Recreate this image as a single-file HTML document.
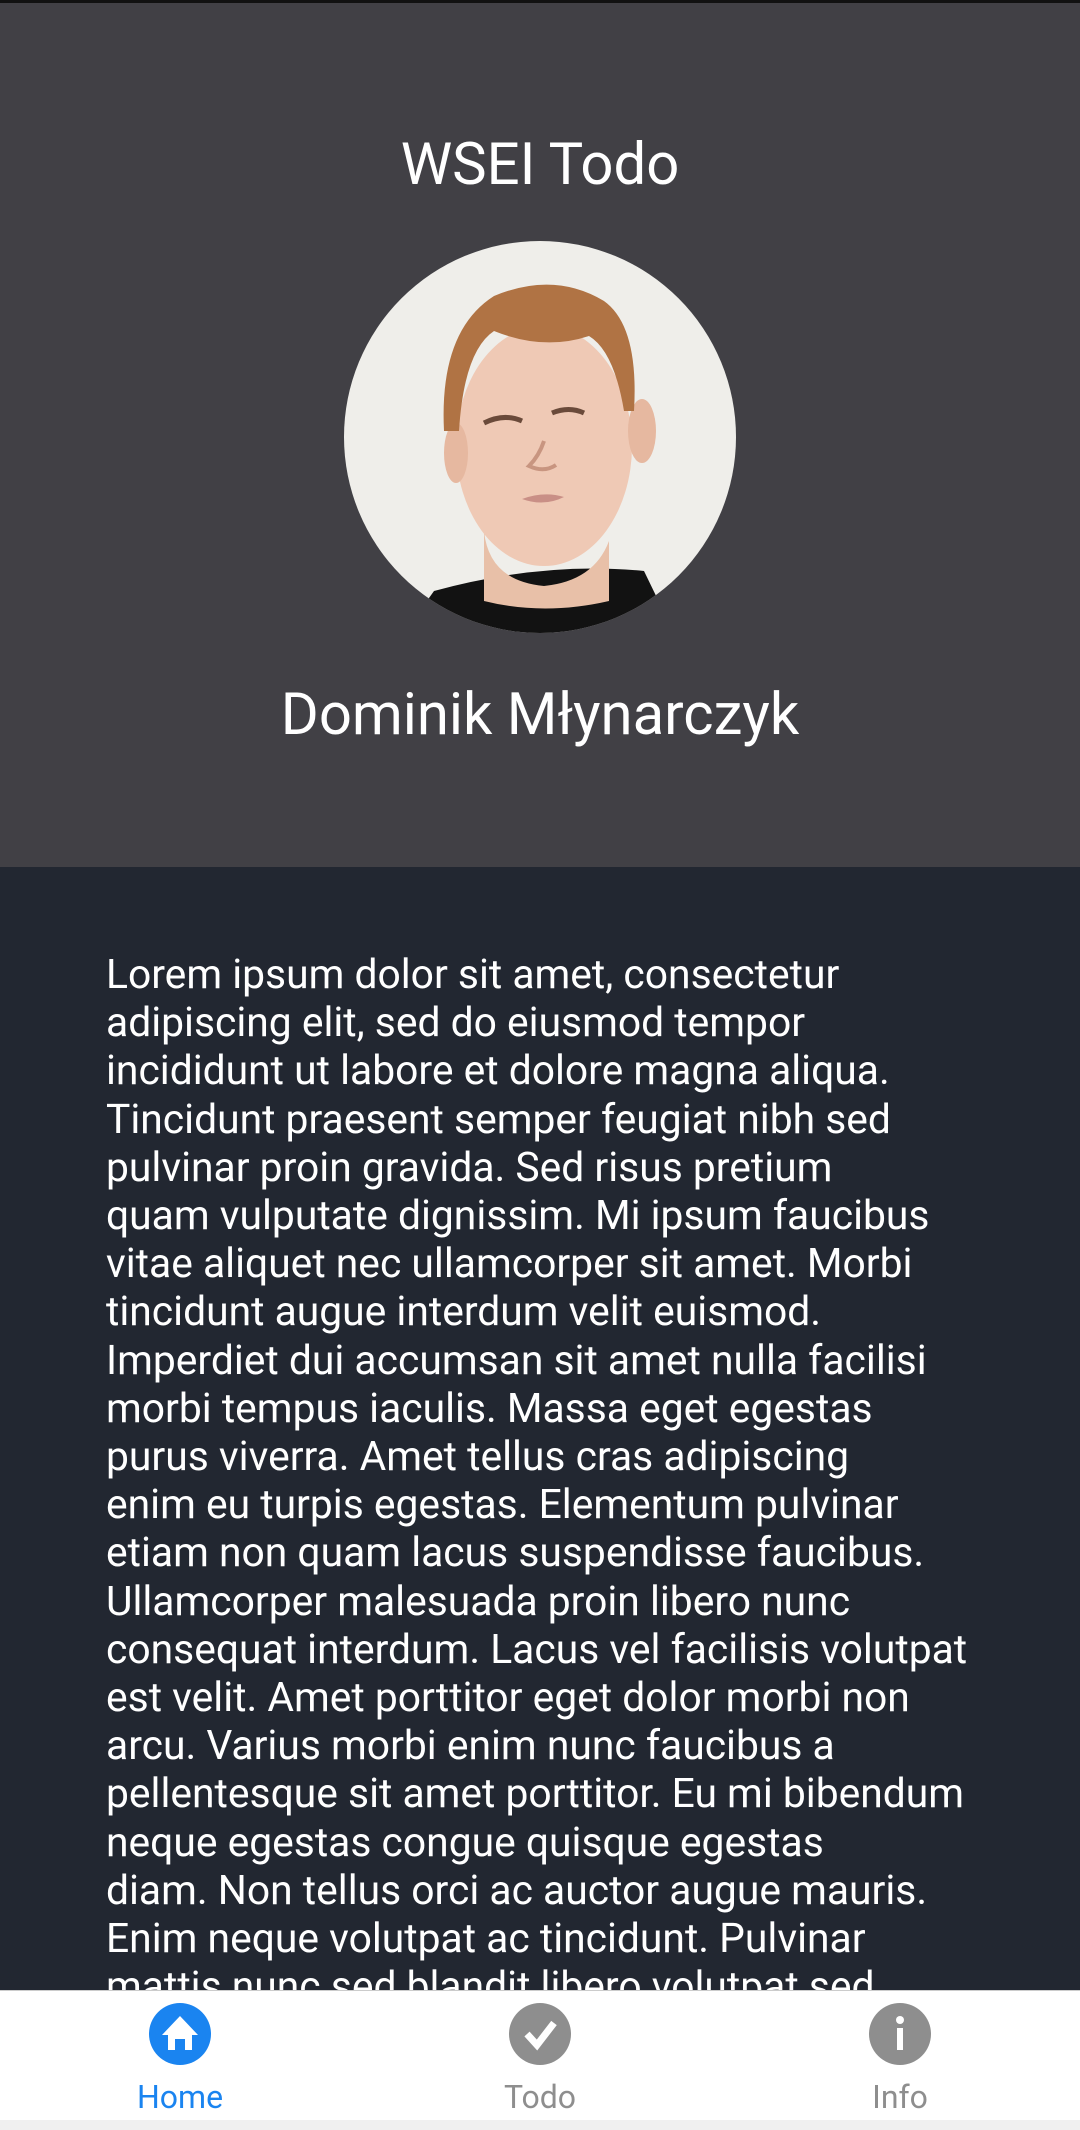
<!DOCTYPE html>
<html><head><meta charset="utf-8"><style>
*{margin:0;padding:0;box-sizing:border-box}
body{width:1080px;height:2130px;overflow:hidden;font-family:"Roboto","Liberation Sans",sans-serif;background:#222731;position:relative}
.top{position:absolute;left:0;top:0;width:1080px;height:867px;background:#414045;border-top:3px solid #111}
.title{position:absolute;top:127px;width:1080px;text-align:center;color:#fff;font-size:58px;line-height:70px}
.name{position:absolute;top:677px;width:1080px;text-align:center;color:#fff;font-size:58px;line-height:70px}
.av{position:absolute;left:344px;top:238px;width:392px;height:392px}
.txt{position:absolute;left:106px;top:950px;color:#fff;font-size:40.8px;line-height:48.2px;white-space:nowrap}
.tab{position:absolute;left:0;top:1990px;width:1080px;height:130px;background:#fff;border-top:1px solid #ccc}
.strip{position:absolute;left:0;top:2120px;width:1080px;height:10px;background:#f0f0f0}
.it{position:absolute;top:0;width:200px;text-align:center}
.it svg{position:absolute;left:69px;top:12px}
.it span{position:absolute;top:86px;left:0;width:200px;font-size:32px;line-height:40px}
</style></head><body>
<div class="top">
<div class="title">WSEI Todo</div>
<svg class="av" viewBox="0 0 392 392">
<defs><clipPath id="c"><circle cx="196" cy="196" r="196"/></clipPath></defs>
<g clip-path="url(#c)">
<rect width="392" height="392" fill="#efeeea"/>
<path d="M90 350 Q200 320 300 330 L330 392 L60 392Z" fill="#121212"/>
<path d="M140 290 Q145 340 200 345 Q250 340 265 300 L265 360 Q200 375 140 360Z" fill="#e8c0a8"/>
<ellipse cx="200" cy="205" rx="88" ry="120" fill="#efc9b5"/>
<ellipse cx="112" cy="212" rx="12" ry="30" fill="#e6b8a0"/>
<ellipse cx="298" cy="190" rx="14" ry="32" fill="#e6b8a0"/>
<path d="M100 190 Q95 90 150 55 Q210 30 260 60 Q295 85 290 170 L280 170 Q270 110 245 95 Q200 110 150 90 Q120 110 115 190Z" fill="#b07344"/>
<path d="M140 182 Q160 172 178 180" stroke="#6a4a3a" stroke-width="5" fill="none"/>
<path d="M208 172 Q225 165 240 172" stroke="#6a4a3a" stroke-width="5" fill="none"/>
<path d="M200 200 Q195 215 185 225 Q200 232 212 224" stroke="#c89580" stroke-width="4" fill="none"/>
<path d="M178 258 Q200 250 220 256 Q200 266 178 258Z" fill="#c98f86"/>
</g></svg>
<div class="name">Dominik Młynarczyk</div>
</div>
<div class="txt">Lorem ipsum dolor sit amet, consectetur<br>adipiscing elit, sed do eiusmod tempor<br>incididunt ut labore et dolore magna aliqua.<br>Tincidunt praesent semper feugiat nibh sed<br>pulvinar proin gravida. Sed risus pretium<br>quam vulputate dignissim. Mi ipsum faucibus<br>vitae aliquet nec ullamcorper sit amet. Morbi<br>tincidunt augue interdum velit euismod.<br>Imperdiet dui accumsan sit amet nulla facilisi<br>morbi tempus iaculis. Massa eget egestas<br>purus viverra. Amet tellus cras adipiscing<br>enim eu turpis egestas. Elementum pulvinar<br>etiam non quam lacus suspendisse faucibus.<br>Ullamcorper malesuada proin libero nunc<br>consequat interdum. Lacus vel facilisis volutpat<br>est velit. Amet porttitor eget dolor morbi non<br>arcu. Varius morbi enim nunc faucibus a<br>pellentesque sit amet porttitor. Eu mi bibendum<br>neque egestas congue quisque egestas<br>diam. Non tellus orci ac auctor augue mauris.<br>Enim neque volutpat ac tincidunt. Pulvinar<br>mattis nunc sed blandit libero volutpat sed</div>
<div class="tab">
<div class="it" style="left:80px"><svg width="62" height="62" viewBox="0 0 62 62"><circle cx="31" cy="31" r="31" fill="#1a84f0"/><path d="M31 13 L49 32 L43 32 L43 47 L36 47 L36 36 L26 36 L26 47 L19 47 L19 32 L13 32Z" fill="#fff"/></svg><span style="color:#1a84f0">Home</span></div>
<div class="it" style="left:440px"><svg width="62" height="62" viewBox="0 0 62 62"><circle cx="31" cy="31" r="31" fill="#8e8e8e"/><path d="M18 31 L28 42 L45 20" stroke="#fff" stroke-width="7" fill="none"/></svg><span style="color:#8e8e8e">Todo</span></div>
<div class="it" style="left:800px"><svg width="62" height="62" viewBox="0 0 62 62"><circle cx="31" cy="31" r="31" fill="#8e8e8e"/><circle cx="31" cy="17" r="4" fill="#fff"/><rect x="28" y="25" width="6" height="22" fill="#fff"/></svg><span style="color:#8e8e8e">Info</span></div>
</div>
<div class="strip"></div>
</body></html>
